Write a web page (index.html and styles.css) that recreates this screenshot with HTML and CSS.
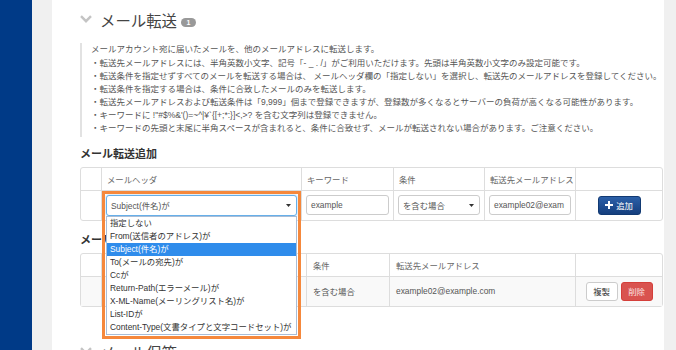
FILE: index.html
```html
<!DOCTYPE html>
<html lang="ja">
<head>
<meta charset="utf-8">
<title>メール転送</title>
<link rel="stylesheet" href="styles.css">
</head>
<body>
<div class="page">
  <div class="sidebar"></div>
  <div class="gutter"></div>
  <main class="main">
    <div class="section-title">
      <svg class="chev" viewBox="0 0 12 8" width="12" height="8"><polyline points="1,1.2 6,6.2 11,1.2" fill="none" stroke="#c4c4c4" stroke-width="2.4"/></svg>
      <span class="title-text">メール転送</span>
      <span class="badge">1</span>
    </div>
    <div class="desc">
      <p class="lead">メールアカウント宛に届いたメールを、他のメールアドレスに転送します。</p>
      <ul class="notes">
        <li>・転送先メールアドレスには、半角英数小文字、記号「- _ . /」がご利用いただけます。先頭は半角英数小文字のみ設定可能です。</li>
        <li>・転送条件を指定せずすべてのメールを転送する場合は、 メールヘッダ欄の「指定しない」を選択し、転送先のメールアドレスを登録してください。</li>
        <li>・転送条件を指定する場合は、条件に合致したメールのみを転送します。</li>
        <li>・転送先メールアドレスおよび転送条件は「9,999」個まで登録できますが、登録数が多くなるとサーバーの負荷が高くなる可能性があります。</li>
        <li>・キーワードに !&quot;#$%&amp;'()=~^|¥`{[+;*:}]&lt;,&gt;? を含む文字列は登録できません。</li>
        <li>・キーワードの先頭と末尾に半角スペースが含まれると、条件に合致せず、メールが転送されない場合があります。ご注意ください。</li>
      </ul>
    </div>

    <h2 class="heading">メール転送追加</h2>
    <div class="tbl">
      <table class="grid grid-add">
        <colgroup>
          <col class="c-num"><col class="c-head"><col class="c-key"><col class="c-cond"><col class="c-addr"><col class="c-act">
        </colgroup>
        <thead>
          <tr><th></th><th>メールヘッダ</th><th>キーワード</th><th>条件</th><th>転送先メールアドレス</th><th></th></tr>
        </thead>
        <tbody>
          <tr>
            <td></td>
            <td>
              <div class="sel-wrap">
                <div class="select focused"><span>Subject(件名)が</span><svg class="caret" viewBox="0 0 5 3" width="5" height="3"><polygon points="0,0 5,0 2.5,3" fill="#333"/></svg></div>
                <div class="ring"></div>
                <ul class="listbox">
                  <li>指定しない</li>
                  <li>From(送信者のアドレス)が</li>
                  <li class="hl">Subject(件名)が</li>
                  <li>To(メールの宛先)が</li>
                  <li>Ccが</li>
                  <li>Return-Path(エラーメール)が</li>
                  <li>X-ML-Name(メーリングリスト名)が</li>
                  <li>List-IDが</li>
                  <li>Content-Type(文書タイプと文字コードセット)が</li>
                </ul>
              </div>
            </td>
            <td><div class="input">example</div></td>
            <td><div class="select"><span>を含む場合</span><svg class="caret" viewBox="0 0 5 3" width="5" height="3"><polygon points="0,0 5,0 2.5,3" fill="#333"/></svg></div></td>
            <td><div class="input">example02@exam</div></td>
            <td class="act"><span class="btn btn-primary"><svg class="plus" viewBox="0 0 8 8" width="8" height="8"><path d="M3 0h2v3h3v2H5v3H3V5H0V3h3z" fill="#fff"/></svg>追加</span></td>
          </tr>
        </tbody>
      </table>
    </div>

    <h2 class="heading heading-list">メール転送一覧</h2>
    <div class="tbl">
      <table class="grid grid-list">
        <colgroup>
          <col class="c-num"><col class="l-head"><col class="l-key"><col class="l-cond"><col class="l-addr"><col class="c-act">
        </colgroup>
        <thead>
          <tr><th></th><th>メールヘッダ</th><th>キーワード</th><th>条件</th><th>転送先メールアドレス</th><th></th></tr>
        </thead>
        <tbody>
          <tr>
            <td></td>
            <td>Subject(件名)が</td>
            <td>example</td>
            <td>を含む場合</td>
            <td>example02@example.com</td>
            <td class="act"><span class="btn btn-default">複製</span><span class="btn btn-danger">削除</span></td>
          </tr>
        </tbody>
      </table>
    </div>

    <div class="section-title next">
      <svg class="chev" viewBox="0 0 12 8" width="12" height="8"><polyline points="1,1.2 6,6.2 11,1.2" fill="none" stroke="#c4c4c4" stroke-width="2.4"/></svg>
      <span class="title-text">メール保管</span>
    </div>
  </main>
  <div class="rail"></div>
</div>
</body>
</html>
```

FILE: styles.css
```css
* { box-sizing: border-box; }
html, body { margin: 0; padding: 0; }
body {
  width: 676px;
  height: 350px;
  overflow: hidden;
  background: #fff;
  color: #555;
  font-family: "Liberation Sans", "Noto Sans CJK JP", sans-serif;
}
.page { display: flex; height: 350px; }
.sidebar { flex: none; width: 32px; background: #003a87; }
.gutter { flex: none; width: 20px; background: #f0f0f0; }
.rail { flex: none; width: 12px; background: #f0f0f0; }
.main {
  flex: none;
  width: 612px;
  padding: 8px 1px 0 28px;
  background: #fff;
}

.section-title { display: flex; align-items: center; height: 24px; }
.section-title.next { margin-top: 33px; }
.chev { flex: none; margin-right: 8px; margin-top: -2px; }
.title-text {
  font-family: "Noto Sans CJK JP", sans-serif;
  font-size: 15.4px;
  line-height: 24px;
  color: #444;
}
.badge {
  margin-left: 4px;
  margin-top: 4px;
  width: 15px;
  height: 9px;
  border-radius: 5px;
  background: #999;
  color: #fff;
  font-size: 7px;
  font-weight: 700;
  line-height: 9px;
  text-align: center;
}

.desc {
  margin-top: 11px;
  border-left: 2px solid #e2e2e2;
  padding: 0 0 2px 9px;
  font-size: 8.5px;
  line-height: 13px;
  white-space: nowrap;
  color: #555;
}
.desc .lead { margin: 0 0 0.5px; }
.notes { list-style: none; margin: 0; padding: 0; }

.heading {
  margin: 8px 0 6px;
  font-family: "Noto Sans CJK JP", sans-serif;
  font-size: 11px;
  line-height: 16px;
  font-weight: 700;
  color: #333;
}
.heading-list { margin-top: 10px; }

.tbl {
  border: 1px solid #dddddd;
  border-radius: 3px;
}
.grid {
  width: 100%;
  table-layout: fixed;
  border-collapse: separate;
  border-spacing: 0;
  font-size: 8.4px;
}
.c-num { width: 20px; }
.c-head { width: 200px; }
.c-key { width: 92px; }
.c-cond { width: 91px; }
.c-addr { width: 91px; }
.c-act { width: 87px; }
.l-head { width: 110px; }
.l-key { width: 95px; }
.l-cond { width: 83px; }
.l-addr { width: 186px; }

.grid th, .grid td {
  border-left: 1px solid #dddddd;
  text-align: left;
  vertical-align: middle;
  white-space: nowrap;
  overflow: visible;
}
.grid th:first-child, .grid td:first-child { border-left: 0; }
.grid th {
  height: 22px;
  padding: 0 5px;
  font-weight: 400;
  color: #666;
}
.grid td {
  height: 30px;
  border-top: 1px solid #dddddd;
  padding: 0 4px;
  color: #555;
}
.grid-list th { padding: 0 6px; }
.grid-list td { padding: 0 6px; background: #f9f9f9; }
.grid .act { text-align: center; padding: 0; }

.select, .input {
  width: 100%;
  height: 20px;
  border: 1px solid #cccccc;
  border-radius: 3px;
  background: #fff;
  color: #555;
  font-size: 8.4px;
  display: flex;
  align-items: center;
  padding: 0 4px;
  overflow: hidden;
}
.select { justify-content: space-between; padding: 0 5px 0 4px; }
.select.focused {
  height: 21px;
  border-color: #66afe9;
  box-shadow: 0 0 3px rgba(102, 175, 233, 0.6);
}
.caret { flex: none; }

.sel-wrap { position: relative; }
.ring {
  position: absolute;
  left: -4px;
  top: -4px;
  width: 199px;
  height: 148px;
  border: 3px solid #f5883c;
  z-index: 2;
  pointer-events: none;
}
.listbox {
  position: absolute;
  left: 0;
  top: 21px;
  width: 191px;
  height: 119px;
  margin: 0;
  padding: 0;
  list-style: none;
  background: #fff;
  border: 1px solid #a9bdd6;
  z-index: 3;
  font-size: 8.4px;
  color: #333;
}
.listbox li {
  height: 13px;
  line-height: 13px;
  padding-left: 3px;
  white-space: nowrap;
}
.listbox li.hl { background: #2f8ceb; color: #fff; }

.btn {
  display: inline-flex;
  align-items: center;
  justify-content: center;
  height: 19px;
  border-radius: 3px;
  font-size: 8.4px;
  vertical-align: middle;
}
.btn-primary {
  width: 43px;
  background: linear-gradient(#2c60a8, #153f7e);
  border: 1px solid #123a73;
  color: #fff;
}
.plus { margin-right: 3px; }
.btn-default {
  width: 32px;
  background: #fff;
  border: 1px solid #cccccc;
  color: #333;
}
.btn-danger {
  width: 32px;
  margin-left: 3px;
  background: #d9534f;
  border: 1px solid #d43f3a;
  color: #fbe1e0;
}
```
